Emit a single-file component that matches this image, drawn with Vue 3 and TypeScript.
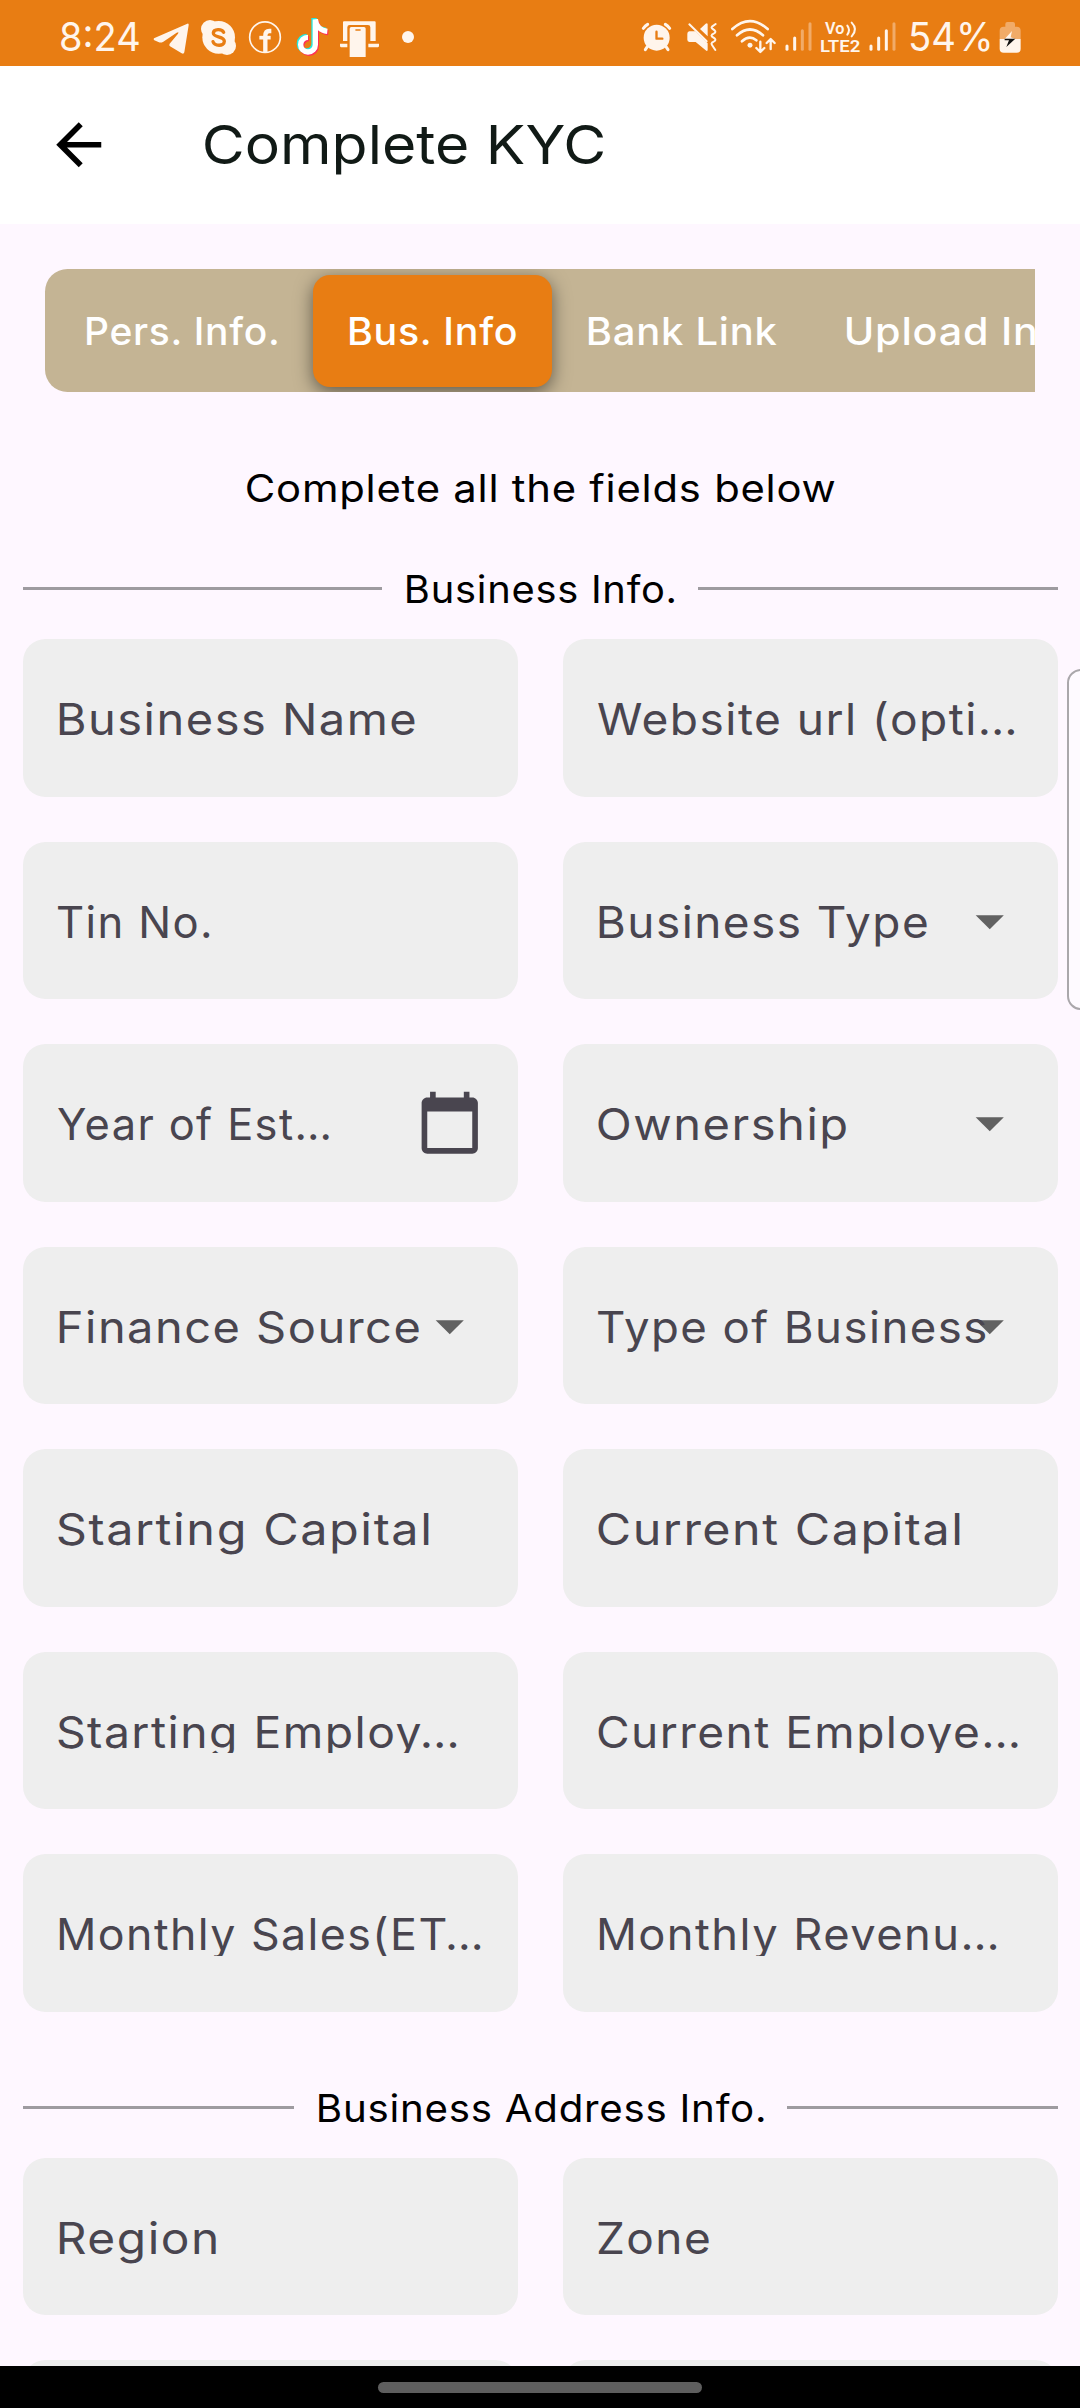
<script setup lang="ts">
type Trailing = 'caret' | 'calendar'

interface Field {
  text: string
  /** distance from the label's first stroke to its last one */
  span: number
  /** inset of the first stroke from the content edge */
  lead?: number
  trailing?: Trailing
  clip?: boolean
}

const ctx = document.createElement('canvas').getContext('2d')!

/** Stretch and indent that make a tracked run of text cover exactly `span` pixels. */
function fit(text: string, size: number, span: number, tracking = 0.7, weight = 400) {
  ctx.font = `${weight} ${size}px Inter`
  const m = ctx.measureText(text)
  const ink = m.actualBoundingBoxLeft + m.actualBoundingBoxRight + tracking * (text.length - 1)
  return {
    letterSpacing: `${tracking}px`,
    textIndent: `${m.actualBoundingBoxLeft.toFixed(2)}px`,
    transform: `scaleX(${(span / ink).toFixed(4)})`,
  }
}

const tabs = [
  { text: 'Pers. Info.', span: 190.5, width: 268, lead: 42, active: false },
  { text: 'Bus. Info', span: 167, width: 239, lead: 37, active: true },
  { text: 'Bank Link', span: 187.5, width: 258, lead: 37, active: false },
  { text: 'Upload Info', span: 231, width: 310, lead: 37, active: false },
]

const businessFields: Field[] = [
  { text: 'Business Name', span: 356, lead: 3 },
  { text: 'Website url (opti…', span: 416.5, lead: 1.5, clip: true },
  { text: 'Tin No.', span: 152, lead: 1.5 },
  { text: 'Business Type', span: 328, lead: 3, trailing: 'caret' },
  { text: 'Year of Est…', span: 271, lead: 1.5, trailing: 'calendar' },
  { text: 'Ownership', span: 248, lead: 2, trailing: 'caret' },
  { text: 'Finance Source', span: 360, lead: 3, trailing: 'caret' },
  { text: 'Type of Business', span: 388, lead: 1.5, trailing: 'caret' },
  { text: 'Starting Capital', span: 371, lead: 2 },
  { text: 'Current Capital', span: 362, lead: 2 },
  { text: 'Starting Employ…', span: 398.5, lead: 2, clip: true },
  { text: 'Current Employe…', span: 420, lead: 2, clip: true },
  { text: 'Monthly Sales(ET…', span: 421.5, lead: 3, clip: true },
  { text: 'Monthly Revenu…', span: 397.5, lead: 3, clip: true },
]

const addressFields: Field[] = [
  { text: 'Region', span: 157, lead: 3 },
  { text: 'Zone', span: 111, lead: 2 },
  { text: '', span: 0 },
  { text: '', span: 0 },
]

const sections = [
  { title: 'Business Info.', span: 267, gap: 316.9, fields: businessFields, cls: 'first' },
  { title: 'Business Address Info.', span: 444.5, gap: 493, fields: addressFields, cls: 'second' },
]

const bars = [
  { x: 21, y: 138 },
  { x: 44, y: 114 },
  { x: 67, y: 92 },
  { x: 90, y: 71 },
]
</script>

<template>
  <div class="screen">
    <header class="status">
      <span class="clock"><span class="fit" :style="fit('8:24', 39.4, 78.3, 0)">8:24</span></span>
      <svg class="ic" width="41.667" height="66" viewBox="340 0 125 198">
        <path d="M343 115 443 71Q448 69 447 76L434 157Q432 164 426 160L391 139Q387 136 390 131L415 101Q419 94 411 98L371 125Q364 129 358 127L344 121Q340 118 343 115Z" />
      </svg>
      <svg class="ic" width="47.333" height="66" viewBox="465 0 142 198">
        <circle cx="536" cy="112" r="49" /><circle cx="510" cy="87" r="27" /><circle cx="561" cy="138" r="27" />
        <path class="cut" stroke-width="10" d="M551 97C546 86 521 86 520 99C519 114 553 107 553 124C553 140 523 139 519 125" />
      </svg>
      <svg class="ic" width="46" height="66" viewBox="607 0 138 198">
        <circle class="line" cx="676" cy="111.500" r="46" stroke-width="5" />
        <path class="line butt" stroke-width="13" d="M677 157V108Q677 93 689 93H695" />
        <path class="line butt" stroke-width="11" d="M659 113H693" />
      </svg>
      <svg class="ic" width="46.667" height="66" viewBox="745 0 140 198">
        <g class="note" stroke-width="16">
          <path stroke="#25e8e0" transform="translate(-4 -3)" d="M827 57V134A22 22 0 1 1 805 112M827 58C829 78 843 92 863 94" />
          <path stroke="#ff2f56" transform="translate(3 4)" d="M827 60V134A22 22 0 1 1 805 112M827 58C829 78 843 92 863 94" />
          <path stroke="#fff" d="M827 59V134A22 22 0 1 1 805 112M827 58C829 78 843 92 863 94" />
        </g>
      </svg>
      <svg class="ic" width="55" height="66" viewBox="885 0 165 198">
        <path d="M912 64H1004Q1007 64 1007 67V123H991V82Q991 75 984 75H929Q922 75 922 82V123H909V67Q909 64 912 64Z" />
        <path d="M900 131H922V142H903Q900 141 900 138ZM985 131H1017V138Q1017 141 1014 142H985Z" />
        <path d="M929 171V86Q929 81 934 81H972Q977 81 977 86V171Z" />
        <path class="cut" stroke-width="5" d="M948 90H960" />
      </svg>
      <svg class="ic" width="30" height="66" viewBox="1050 0 90 198"><circle cx="1104" cy="111" r="18" /></svg>

      <div class="spacer"></div>

      <svg class="ic" width="35" height="66" viewBox="60 0 105 198">
        <circle cx="110" cy="113" r="39" />
        <path class="line" stroke-width="9" d="M70 85Q76 77 83 73M149 85Q143 77 136 73M82 140 76 149M138 140 144 149" />
        <path class="cut" stroke-width="7" d="M109.500 95V116H127" />
      </svg>
      <svg class="ic" width="51.667" height="66" viewBox="165 0 155 198">
        <path d="M208 94H226L263 130V150Q262 155 257 151L227 126H208Q202 125 202 119V101Q202 95 208 94ZM240 87 257 71Q262 67 263 73V109Z" />
        <path class="line" stroke-width="6" d="M208 73 260 124M287 72 276 80Q273 83 277 86L284 91Q288 95 284 99L276 104Q273 107 276 110L284 115Q288 119 284 123L276 128Q273 131 276 135L286 150" />
      </svg>
      <svg class="ic" width="53.333" height="66" viewBox="320 0 160 198">
        <path class="line" stroke-width="8" d="M336 87Q389 40 442 87M350 106Q389 71 428 106M365 124Q387 104 408 121" />
        <circle cx="389" cy="136" r="7.500" />
        <path class="line" stroke-width="7" d="M420 125V154M408 144 420 156 432 144M451 147V118M439 129 451 117 463 129" />
      </svg>
      <svg class="ic" width="40" height="66" viewBox="480 0 120 198">
        <path v-for="(b, i) in bars" :key="i" class="line" :class="{ dim: i > 1 }" stroke-width="9" :d="`M${480 + b.x} ${b.y}V148`" />
      </svg>
      <svg class="ic" width="44" height="66" viewBox="600 0 132 198">
        <text x="615" y="103" font-size="49" textLength="58" lengthAdjust="spacingAndGlyphs">Vo</text>
        <path class="line" stroke-width="6" d="M682 77Q692 90 682 104M695 68Q715 88 695 109" />
        <text x="600" y="156" font-size="49" textLength="121" lengthAdjust="spacingAndGlyphs">LTE2</text>
      </svg>
      <svg class="ic" width="33.333" height="66" viewBox="732 0 100 198">
        <path v-for="(b, i) in bars" :key="i" class="line" :class="{ dim: i > 2 }" stroke-width="9" :d="`M${732 + b.x} ${b.y}V148`" />
      </svg>
      <span class="percent"><span class="fit" :style="fit('54%', 39.4, 79, 0)">54%</span></span>
      <svg class="ic" width="22.333" height="66" viewBox="1138 0 67 198">
        <path class="faint" d="M1140 117V92Q1140 80 1152 80H1157V72Q1157 66 1163 66H1180Q1186 66 1186 72V80H1191Q1203 80 1203 92V117Z" />
        <path d="M1140 117H1203V146Q1203 158 1191 158H1152Q1140 158 1140 146Z" />
        <path d="M1177 93 1155 117H1187L1173 112Z" />
        <path fill="#111" d="M1155 116H1187L1160 141 1168 121H1155Z" />
      </svg>
    </header>

    <div class="appbar">
      <svg class="back" viewBox="0 0 24 24"><path d="M20 11H7.830l5.590-5.590L12 4l-8 8 8 8 1.410-1.410L7.830 13H20v-2z" /></svg>
      <h1 class="fit" :style="fit('Complete KYC', 54, 398.7, 0)">Complete KYC</h1>
    </div>

    <main>
      <nav class="tabs">
        <div
          v-for="t in tabs"
          :key="t.text"
          class="tab"
          :class="{ active: t.active }"
          :style="{ width: t.width + 'px', paddingLeft: t.lead + 'px' }"
        >
          <span class="fit" :style="fit(t.text, 38, t.span, 0.7, 500)">{{ t.text }}</span>
        </div>
      </nav>

      <p class="hint"><span class="fit" :style="fit('Complete all the fields below', 38, 587.5)">Complete all the fields below</span></p>

      <section v-for="s in sections" :key="s.title" :class="s.cls">
        <div class="divider">
          <i></i>
          <h2 :style="{ width: s.gap + 'px' }"><span class="fit" :style="fit(s.title, 38, s.span)">{{ s.title }}</span></h2>
          <i></i>
        </div>
        <div class="grid">
          <div v-for="(f, n) in s.fields" :key="n" class="field">
            <span v-if="f.text" class="label" :class="{ clip: f.clip }" :style="{ paddingLeft: f.lead + 'px' }">
              <span class="fit" :style="fit(f.text, 44, f.span, 1.4)">{{ f.text }}</span>
            </span>
            <svg v-if="f.trailing === 'caret'" class="trail caret" viewBox="0 0 24 24"><path d="M7 10l5 5 5-5z" /></svg>
            <svg v-if="f.trailing === 'calendar'" class="trail" viewBox="0 0 24 24">
              <path d="M20 3h-1V1h-2v2H7V1H5v2H4c-1.100 0-2 .9-2 2v16c0 1.100.9 2 2 2h16c1.100 0 2-.9 2-2V5c0-1.100-.9-2-2-2zm0 18H4V8h16v13z" />
            </svg>
          </div>
        </div>
      </section>
    </main>

    <footer><span class="pill"></span></footer>
    <div class="edge"></div>
  </div>
</template>

<style>
body {
  margin: 0;
}
</style>

<style scoped>
.screen {
  position: relative;
  display: flex;
  flex-direction: column;
  width: 1080px;
  height: 2408px;
  overflow: hidden;
  background: #fef7ff;
  font-family: Inter, 'Open Sans', sans-serif;
}
.fit {
  display: block;
  width: max-content;
  white-space: nowrap;
  transform-origin: 0 50%;
}
.status {
  display: flex;
  flex: none;
  height: 66px;
  background: #e87d13;
  color: #fff5ec;
}
.ic {
  display: block;
  flex: none;
  fill: #fff5ec;
}
.line,
.cut {
  fill: none;
  stroke: #fff5ec;
  stroke-linecap: round;
  stroke-linejoin: round;
}
.cut {
  stroke: #e87d13;
}
.butt {
  stroke-linecap: butt;
}
.dim {
  stroke: #f1ab68;
}
.faint {
  fill: #f1ab68;
}
.note {
  fill: none;
}
.ic text {
  font-family: Roboto, sans-serif;
  font-weight: 600;
}
.clock,
.percent {
  display: block;
  flex: none;
  font-size: 39.400px;
  line-height: 74px;
}
.clock {
  width: 92.600px;
  margin-left: 60.700px;
}
.percent {
  width: 87.300px;
  margin-left: 14px;
}
.spacer {
  flex: none;
  width: 220px;
}
.appbar {
  display: flex;
  flex: none;
  align-items: center;
  height: 157.500px;
  background: #fff;
}
.back {
  flex: none;
  width: 67.500px;
  height: 67.500px;
  margin: 0 92.500px 0 45px;
}
h1 {
  margin: 0;
  font-size: 54px;
  font-weight: 400;
  line-height: 68px;
  color: #111a16;
}
main {
  flex: none;
  height: 2142.500px;
  overflow: hidden;
}
.tabs {
  display: flex;
  height: 123px;
  margin: 45.500px 45px 0;
  overflow: hidden;
  border-radius: 22.500px 0 0 22.500px;
  background: #c4b494;
}
.tab {
  box-sizing: border-box;
  flex: none;
  padding-top: 32px;
  font-size: 38px;
  font-weight: 500;
  line-height: 60px;
  color: #fff;
}
.active {
  height: 112.500px;
  margin-top: 5.500px;
  padding-top: 26.500px;
  border-radius: 17px;
  background: #e87d13;
  box-shadow: 0 5px 18px rgba(0, 0, 0, 0.5);
}
.hint {
  margin: 66px 0 0 246.500px;
  font-size: 38px;
  line-height: 60px;
}
.divider {
  display: flex;
  align-items: center;
  height: 60px;
}
.divider i {
  flex: 1;
  height: 3px;
  margin-top: -1px;
  background: #9e9ba0;
}
h2 {
  box-sizing: border-box;
  margin: 0;
  padding-left: 25px;
  font-size: 38px;
  font-weight: 400;
  line-height: 60px;
  color: #000;
}
section {
  padding: 0 22.500px;
}
.first {
  margin-top: 41.300px;
}
.second {
  margin-top: 66px;
}
.grid {
  display: grid;
  grid-template-columns: repeat(2, minmax(0, 1fr));
  gap: 45px;
  margin-top: 20px;
}
.field {
  display: flex;
  box-sizing: border-box;
  height: 157.500px;
  padding: 0 33.750px;
  justify-content: space-between;
  border-radius: 22.500px;
  background: #eee;
}
.label {
  display: block;
  box-sizing: border-box;
  flex: 1;
  min-width: 0;
  height: 60px;
  margin-top: 56px;
  font-size: 44px;
  line-height: 48px;
  color: #49454f;
}
.clip {
  height: 45.400px;
  overflow: hidden;
}
.trail {
  flex: none;
  width: 67.500px;
  height: 67.500px;
  margin-top: 45px;
  fill: #49454f;
}
.caret {
  fill: #616161;
}
footer {
  display: flex;
  flex: none;
  justify-content: center;
  height: 42px;
  background: #000;
}
.pill {
  width: 324px;
  height: 11px;
  margin-top: 16px;
  border-radius: 5.500px;
  background: #5e5e5e;
}
.edge {
  position: absolute;
  top: 669px;
  left: 1067px;
  box-sizing: border-box;
  width: 36px;
  height: 341px;
  border: 2.500px solid #aaa7ab;
  border-radius: 14px;
  background: rgba(255, 255, 255, 0.4);
}
</style>
